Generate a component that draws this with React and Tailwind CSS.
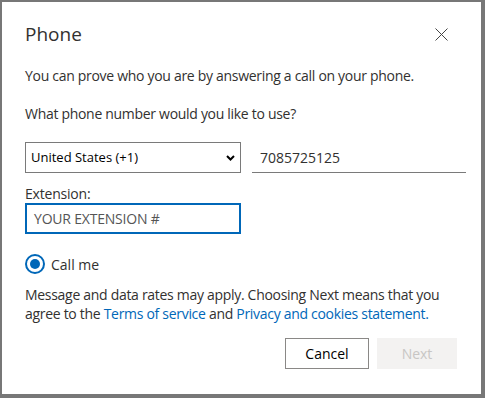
import React from "react";

export default function App() {
  return (
    <div className="w-[485px] h-[398px] bg-[#777777] pt-[2px] pl-[2px] overflow-hidden" style={{ fontFamily: '"Open Sans", "Noto Sans", sans-serif' }}>
      <div className="w-[479px] h-[392px] bg-white pl-[23px] pr-[24px] text-[#323130]">
        <div className="flex items-center justify-between pt-[18px]">
          <h1 className="text-[19px] leading-[28px] font-medium text-[#323130]">Phone</h1>
          <button className="w-[16px] h-[16px] flex items-center justify-center mr-[8px]" aria-label="Close">
            <svg width="13" height="13" viewBox="0 0 13 13" fill="none" stroke="#444" strokeWidth="1">
              <path d="M0.5 0.5 L12.5 12.5 M12.5 0.5 L0.5 12.5" />
            </svg>
          </button>
        </div>
        <p className="mt-[18px] text-[14px] leading-[20px] tracking-[-0.3px]">You can prove who you are by answering a call on your phone.</p>
        <p className="mt-[18px] text-[14px] leading-[20px] tracking-[-0.3px]">What phone number would you like to use?</p>
        <div className="mt-[18px] flex gap-[11px] mr-[-9px]">
          <div className="w-[216px] h-[31px] border border-[#7a7a7a] flex items-center justify-between pl-[5px] pr-[5px] text-[13px] text-black">
            <span>United States (+1)</span>
            <svg width="9" height="6" viewBox="0 0 9 6" fill="none" stroke="#000" strokeWidth="2">
              <path d="M1 1 L4.5 4.5 L8 1" />
            </svg>
          </div>
          <div className="w-[214px] h-[31px] border-b border-[#7a7a7a] flex items-center pl-[8px] text-[14px]">7085725125</div>
        </div>
        <div className="mt-[12px] text-[14px] leading-[18px] tracking-[-0.2px]">Extension:</div>
        <div className="w-[216px] h-[31px] border-2 border-[#0067b8] flex items-center pl-[7px] text-[14px] text-[#555] tracking-[-0.2px]">YOUR EXTENSION #</div>
        <div className="mt-[20px] flex items-center gap-[6px] h-[20px]">
          <div className="w-[20px] h-[20px] rounded-full border-2 border-[#0067b8] flex items-center justify-center">
            <div className="w-[10px] h-[10px] rounded-full bg-[#0067b8]" />
          </div>
          <span className="text-[14px]">Call me</span>
        </div>
        <p className="mt-[11px] text-[14px] leading-[19px] tracking-[-0.3px] mr-[-4px]">
          Message and data rates may apply. Choosing Next means that you agree to the{" "}
          <a className="text-[#0067b8]">Terms of service</a> and{" "}
          <a className="text-[#0067b8]">Privacy and cookies statement.</a>
        </p>
        <div className="mt-[15px] flex justify-end gap-[8px]">
          <button className="w-[84px] h-[31px] border border-[#8a8886] bg-white text-[14px] text-black">Cancel</button>
          <button className="w-[80px] h-[31px] bg-[#f3f2f1] text-[14px] text-[#c8c6c4]">Next</button>
        </div>
      </div>
    </div>
  );
}
